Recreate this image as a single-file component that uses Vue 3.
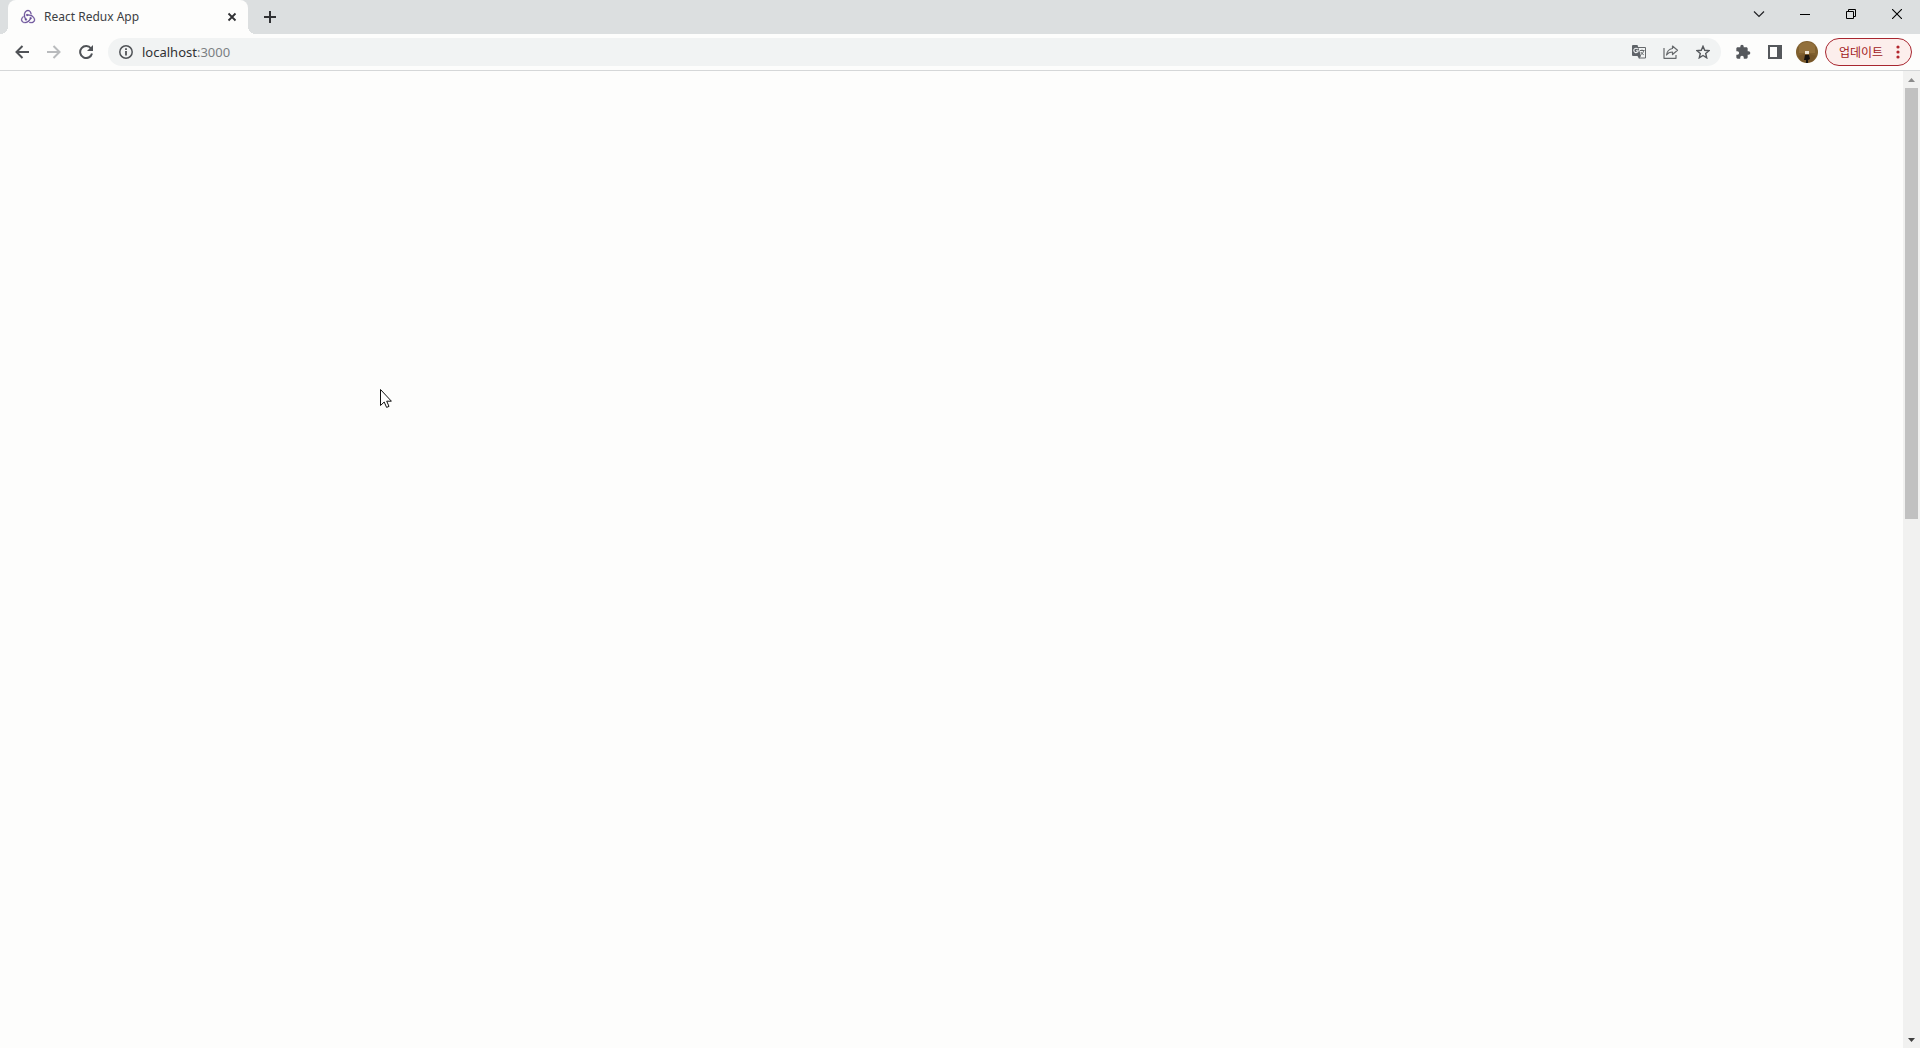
<script setup>
import { ref } from 'vue'

const tabTitle = ref('React Redux App')
const url = ref({ host: 'localhost', port: ':3000' })
</script>

<template>
  <div class="browser">
    <header class="tabstrip">
      <div class="tab">
        <svg class="favicon" viewBox="4 7 92 92" fill="#664c96" stroke="#664c96" stroke-width="2" aria-hidden="true">
          <path d="M65.6 65.4c2.9-.3 5.1-2.8 5-5.8-.1-3-2.6-5.4-5.6-5.4h-.2c-3.1.1-5.5 2.7-5.4 5.8.1 1.5.7 2.8 1.6 3.7-3.4 6.7-8.6 11.6-16.4 15.7-5.3 2.8-10.8 3.8-16.3 3.1-4.5-.6-8-2.6-10.2-5.9-3.2-4.9-3.5-10.2-.8-15.5 1.9-3.8 4.9-6.6 6.8-8-.4-1.3-1-3.5-1.3-5.1-14.5 10.5-13 24.7-8.6 31.4 3.3 5 10 8.1 17.4 8.1 2 0 4-.2 6-.7 12.8-2.500 22.500-10.100 28-21.400z" />
          <path d="M83.200 53c-7.600-8.900-18.800-13.800-31.600-13.800H50c-.900-1.800-2.800-3-4.900-3h-.2c-3.100.1-5.500 2.700-5.400 5.800.1 3 2.600 5.400 5.600 5.400h.2c2.200-.1 4.100-1.500 4.900-3.400H52c7.600 0 14.800 2.200 21.300 6.500 5 3.300 8.600 7.600 10.600 12.800 1.700 4.200 1.600 8.300-.2 11.800-2.800 5.300-7.500 8.200-13.700 8.200-4 0-7.800-1.200-9.800-2.100-1.100 1-3.100 2.600-4.500 3.600 4.300 2 8.700 3.100 12.900 3.100 9.600 0 16.700-5.300 19.400-10.600 2.900-5.800 2.700-15.800-4.800-24.300z" />
          <path d="M32.400 67.100c.1 3 2.600 5.400 5.600 5.400h.2c3.100-.1 5.500-2.700 5.400-5.800-.1-3-2.600-5.400-5.600-5.400h-.2c-.2 0-.5 0-.7.1-4.100-6.800-5.800-14.200-5.200-22.200.4-6 2.400-11.200 5.900-15.500 2.900-3.700 8.500-5.500 12.300-5.600 10.600-.2 15.100 13 15.400 18.300 1.300.3 3.500 1 5 1.500-1.200-16.200-11.200-24.600-20.800-24.600-9 0-17.300 6.500-20.600 16.100-4.600 12.800-1.600 25.100 4 34.800-.5.700-.8 1.800-.7 2.900z" />
        </svg>
        <span class="tab-title">{{ tabTitle }}</span>
        <button class="tab-close" aria-label="Close tab">
          <svg width="10" height="10" viewBox="0 0 10 10"><path d="M1.500 1.500l7 7M8.500 1.500l-7 7" stroke="#303134" stroke-width="1.800" /></svg>
        </button>
      </div>
      <button class="new-tab" aria-label="New tab">
        <svg width="12" height="12" viewBox="0 0 12 12"><path d="M6 0v12M0 6h12" stroke="#303134" stroke-width="2" /></svg>
      </button>
      <div class="window-controls">
        <button aria-label="Search tabs">
          <svg width="12" height="12" viewBox="0 0 12 12" fill="none"><path d="M1 3.500l5 5 5-5" stroke="#202124" stroke-width="1.200" /></svg>
        </button>
        <button aria-label="Minimize">
          <svg width="10" height="10" viewBox="0 0 10 10"><path d="M0 5.500h10" stroke="#000" /></svg>
        </button>
        <button aria-label="Restore">
          <svg width="10" height="10" viewBox="0 0 10 10" fill="none"><path d="M.5 2.500h7v7h-7zM2.500 2.500v-2h7v7h-2" stroke="#000" /></svg>
        </button>
        <button aria-label="Close">
          <svg width="10" height="10" viewBox="0 0 10 10"><path d="M0 0l10 10M10 0L0 10" stroke="#000" stroke-width="1.100" /></svg>
        </button>
      </div>
    </header>

    <nav class="toolbar">
      <button class="tool" aria-label="Back">
        <svg width="14" height="14" viewBox="0 0 14 14" fill="none"><path d="M14 7H1.500M7.500 1L1.500 7l6 6" stroke="#505357" stroke-width="2" /></svg>
      </button>
      <button class="tool" aria-label="Forward" disabled>
        <svg width="14" height="14" viewBox="0 0 14 14" fill="none"><path d="M0 7h12.500M6.500 1l6 6-6 6" stroke="#b9bbbd" stroke-width="2" /></svg>
      </button>
      <button class="tool" aria-label="Reload">
        <svg width="14" height="14" viewBox="0 0 14 14" fill="none"><path d="M12 3.500A6 6 0 1 0 13 8.500" stroke="#505357" stroke-width="2" /><path d="M14 0v6H8z" fill="#505357" /></svg>
      </button>
      <div class="omnibox">
        <button class="site-info" aria-label="Site information">
          <svg width="14" height="14" viewBox="0 0 14 14" fill="none"><circle cx="7" cy="7" r="6.200" stroke="#505357" stroke-width="1.500" /><path d="M7 6v4.500M7 3.200v1.800" stroke="#505357" stroke-width="1.800" /></svg>
        </button>
        <span class="url">{{ url.host }}<span class="port">{{ url.port }}</span></span>
        <button class="tool" aria-label="Translate">
          <svg width="14" height="14" viewBox="0 0 14 14" fill="none"><path d="M6 2.500h7.500v10.500H7" stroke="#66696c" /><path d="M0 1a1 1 0 0 1 1-1h4.500L9 11H1a1 1 0 0 1-1-1z" fill="#5f6368" /><path d="M5.800 4.100a2.200 2.200 0 1 0 .4 1.700H4" stroke="#f1f3f4" stroke-width="1.100" /><path d="M8 5.500h4.500M10 4.500v1M11.700 5.500c-.3 2-1.500 3.200-2.700 4M8.800 7c.6 1.200 1.600 2 2.900 2.700" stroke="#66696c" /><path d="M5.500 11h3.500l-2 2.700z" fill="#5f6368" /></svg>
        </button>
        <button class="tool" aria-label="Share">
          <svg width="16" height="14" viewBox="0 0 16 14" fill="none" stroke="#66696c" stroke-width="1.200" stroke-linejoin="round"><path d="M1 3v10.300h12V10" /><path d="M9.500 1l5 4.300-5 4.200V7C6.500 7 4.800 8 3.500 10 4 6.500 6 4 9.500 3.500z" /></svg>
        </button>
        <button class="tool" aria-label="Bookmark this page">
          <svg width="14" height="14" viewBox="0 0 14 14" fill="none"><path d="M7 1.300l1.700 4 4.300.4-3.300 2.800 1 4.300L7 10.500l-3.700 2.300 1-4.300L1 5.700l4.300-.4z" stroke="#55585c" stroke-width="1.400" /></svg>
        </button>
      </div>
      <button class="tool extensions" aria-label="Extensions">
        <svg width="16" height="16" viewBox="0 0 24 24" fill="#55585c"><path d="M20.500 11H19V7c0-1.100-.9-2-2-2h-4V3.500a2.500 2.500 0 0 0-5 0V5H4c-1.100 0-2 .9-2 2v3.800h1.500a2.700 2.700 0 0 1 0 5.400H2V20c0 1.100.9 2 2 2h3.800v-1.500a2.700 2.700 0 0 1 5.400 0V22H17c1.100 0 2-.9 2-2v-4h1.500a2.500 2.500 0 0 0 0-5z" /></svg>
      </button>
      <button class="tool" aria-label="Side panel">
        <svg width="14" height="14" viewBox="0 0 14 14"><path d="M0 0h14v14H0zM2 2v10h7V2z" fill="#55585c" fill-rule="evenodd" /></svg>
      </button>
      <button class="tool" aria-label="Profile">
        <svg width="22" height="22" viewBox="0 0 22 22"><circle cx="11" cy="11" r="11" fill="#80602f" /><path d="M3 5a10 10 0 0 1 16 0v7H3z" fill="#92703c" /><path d="M2 15l6-2h6l6 2-3 5-6 2-6-2z" fill="#765629" /><path d="M9 10h4v3H9z" fill="#eee4d4" /><path d="M9 14h4l1 4-2 1v3h-2v-3l-2 0z" fill="#17130f" /></svg>
      </button>
      <button class="update">
        <span>업데이트</span>
        <svg width="4" height="14" viewBox="0 0 4 14" fill="#b3262d"><circle cx="2" cy="2" r="1.600" /><circle cx="2" cy="7" r="1.600" /><circle cx="2" cy="12" r="1.600" /></svg>
      </button>
    </nav>

    <div class="viewport">
      <main class="page"></main>
      <div class="scrollbar">
        <div class="arrow"><svg width="7" height="4" viewBox="0 0 7 4"><path d="M0 4l3.500-4L7 4z" fill="#8b8b8b" /></svg></div>
        <div class="track"><div class="thumb"></div></div>
        <div class="arrow"><svg width="7" height="4" viewBox="0 0 7 4"><path d="M0 0h7L3.500 4z" fill="#404040" /></svg></div>
      </div>
    </div>

    <svg class="cursor" width="12" height="19" viewBox="0 0 12 19"><path d="M.5.500v16l3.700-3.500 2.400 5.400 2.400-1-2.300-5.200h4.700z" fill="#fff" stroke="#111" /></svg>
  </div>
</template>

<style>
body {
  margin: 0;
}
</style>

<style scoped>
.browser {
  position: relative;
  display: flex;
  flex-direction: column;
  height: 100vh;
  background: #fdfdfc;
  color: #3c4043;
  font-family: "Noto Sans", "Noto Sans CJK KR", sans-serif;
}

button {
  display: flex;
  align-items: center;
  justify-content: center;
  margin: 0;
  padding: 0;
  border: 0;
  background: none;
  color: inherit;
  font: inherit;
}

svg {
  flex: none;
  display: block;
}

.tabstrip {
  display: flex;
  height: 34px;
  padding-left: 8px;
  background: #dcdfe0;
}

.tab {
  position: relative;
  display: flex;
  align-items: center;
  box-sizing: border-box;
  width: 240px;
  padding: 0 8px 0 12px;
  border-radius: 8px 8px 0 0;
  background: #fdfdfc;
}

.tab::before,
.tab::after {
  content: "";
  position: absolute;
  bottom: 0;
  width: 8px;
  height: 8px;
}

.tab::before {
  right: 100%;
  background: radial-gradient(circle at 0 0, transparent 8px, #fdfdfc 8px);
}

.tab::after {
  left: 100%;
  background: radial-gradient(circle at 100% 0, transparent 8px, #fdfdfc 8px);
}

.favicon {
  width: 16px;
  height: 16px;
}

.tab-title {
  flex: 1;
  margin-left: 8px;
  font-size: 12px;
  line-height: 16px;
}

.tab-close {
  width: 16px;
  height: 16px;
}

.new-tab {
  width: 28px;
  margin-left: 8px;
}

.window-controls {
  display: flex;
  height: 28px;
  margin-left: auto;
}

.window-controls button {
  width: 46px;
}

.toolbar {
  display: flex;
  align-items: center;
  height: 36px;
  padding: 0 8px 0 6px;
  border-bottom: 1px solid #d5d7d8;
}

.tool {
  width: 32px;
  height: 28px;
}

.omnibox {
  display: flex;
  flex: 1;
  align-items: center;
  height: 28px;
  margin-left: 6px;
  padding-right: 2px;
  border-radius: 14px;
  background: #f1f3f3;
}

.site-info {
  box-sizing: border-box;
  width: 34px;
  height: 28px;
  padding-left: 2px;
}

.url {
  flex: 1;
  font-size: 13px;
  line-height: 20px;
  color: #303134;
}

.port {
  color: #7b7f83;
}

.extensions {
  margin-left: 6px;
}

.update {
  box-sizing: border-box;
  justify-content: space-between;
  width: 87px;
  height: 28px;
  margin-left: 2px;
  padding: 0 11px 0 13px;
  border: 1px solid #a8262f;
  border-radius: 14px;
  background: #fceeec;
  color: #a01822;
  font-size: 12px;
}

.viewport {
  display: flex;
  flex: 1;
  min-height: 0;
}

.page {
  flex: 1;
}

.scrollbar {
  display: flex;
  flex-direction: column;
  width: 17px;
  background: #f1f1f0;
}

.arrow {
  display: flex;
  align-items: center;
  justify-content: center;
  height: 17px;
}

.track {
  flex: 1;
  padding: 0 2px;
}

.thumb {
  height: 45.7%;
  background: #c1c1c1;
}

.cursor {
  position: absolute;
  top: 389px;
  left: 380px;
}
</style>
